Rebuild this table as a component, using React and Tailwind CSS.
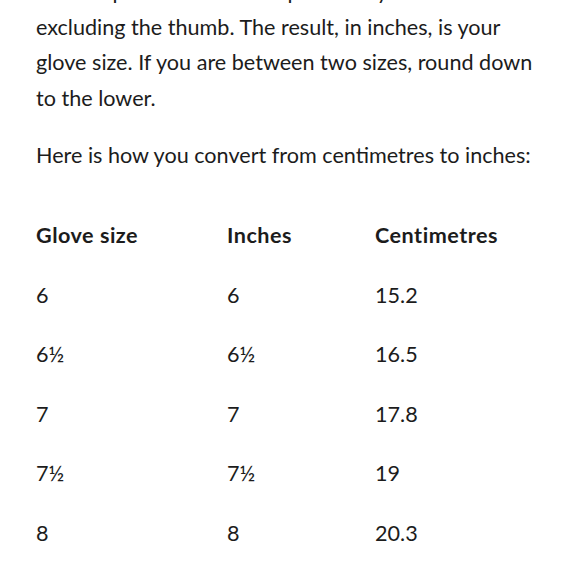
const rows = [
  ["6", "6", "15.2"],
  ["6½", "6½", "16.5"],
  ["7", "7", "17.8"],
  ["7½", "7½", "19"],
  ["8", "8", "20.3"],
];

const intro = [
  "Use a tape measure to wrap around your hand at the widest part,",
  "excluding the thumb. The result, in inches, is your",
  "glove size. If you are between two sizes, round down",
  "to the lower.",
];

export default function App() {
  return (
    <div className="bg-white h-[580px] overflow-hidden text-[#1c1c1c] font-['Lato',sans-serif] text-[21.6px]">
      <div className="px-9 mt-[-26px]">
        <p className="leading-[35.5px] whitespace-nowrap">
          {intro.map((l) => (
            <span key={l} className="block">
              {l}
            </span>
          ))}
        </p>
        <p className="leading-[35.5px] mt-[22px] whitespace-nowrap">
          Here is how you convert from centimetres to inches:
        </p>
        <div className="mt-[32px] grid grid-cols-[191px_148px_1fr]">
          <div className="h-[59.5px] flex items-center font-bold tracking-[0.5px]">Glove size</div>
          <div className="h-[59.5px] flex items-center font-bold tracking-[0.5px]">Inches</div>
          <div className="h-[59.5px] flex items-center font-bold tracking-[0.5px]">Centimetres</div>
          {rows.map((r, i) =>
            r.map((c, j) => (
              <div key={i + "-" + j} className="h-[59.5px] flex items-center">
                {c}
              </div>
            ))
          )}
        </div>
      </div>
    </div>
  );
}
